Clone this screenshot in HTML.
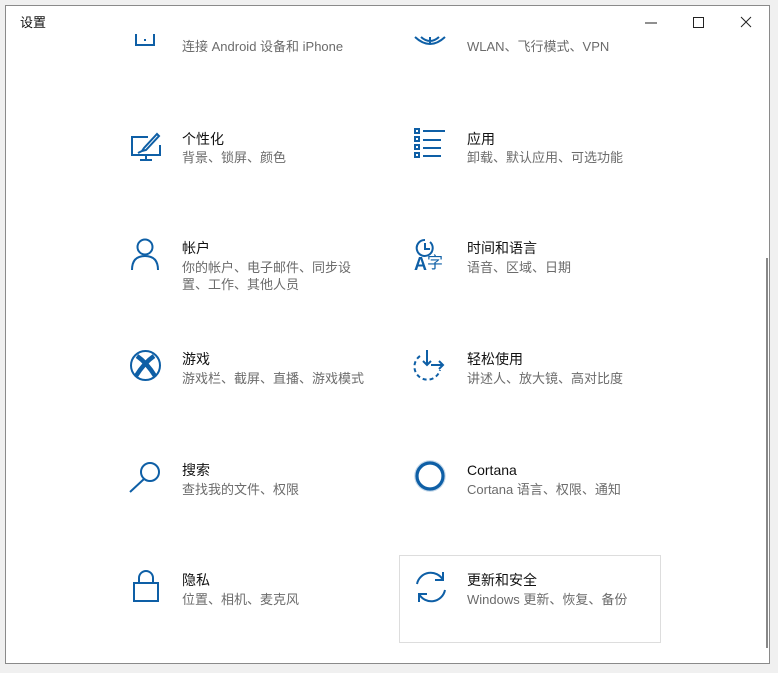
<!DOCTYPE html>
<html><head><meta charset="utf-8"><style>
body{margin:0;width:778px;height:673px;background:#f0f0f0;position:relative;overflow:hidden;font-family:"Liberation Sans","Noto Sans CJK SC",sans-serif}
.win{position:absolute;left:5px;top:5px;width:765px;height:659px;background:#fff;border:1px solid #8a8a8a;box-sizing:border-box}
.t{position:absolute;font-size:14px;color:#111;line-height:18px;white-space:nowrap}
.s{position:absolute;font-size:13px;color:#6b6b6b;line-height:18px;white-space:nowrap}
svg{position:absolute;overflow:visible}
.i{fill:none;stroke:#0e5fa6;stroke-width:2}
</style></head><body>
<div class="win"></div>
<div class="t" style="left:20px;top:14px;font-size:13px">设置</div>
<svg style="left:640px;top:14px" width="120" height="20"><path d="M5 9h12" stroke="#222" stroke-width="1"/><rect x="53.5" y="3.5" width="10" height="10" fill="none" stroke="#222"/><path d="M101 3l10 10M111 3l-10 10" stroke="#222" stroke-width="1"/></svg>
<div style="position:absolute;left:766px;top:258px;width:2px;height:390px;background:#888"></div>

<svg style="left:130px;top:34px" width="30" height="20"><path class="i" d="M6 0v11h18V0M14 6h2"/></svg>
<div class="s" style="left:182px;top:38px">连接 Android 设备和 iPhone</div>
<svg style="left:413px;top:34px" width="34" height="20"><path class="i" d="M2 3q15 14 30 0M8 3q9 8 18 0M17 3v7"/></svg>
<div class="s" style="left:467px;top:38px">WLAN、飞行模式、VPN</div>

<svg style="left:130px;top:131px" width="34" height="30"><path class="i" d="M18 6H2v18h28v-10M16 24v5M10 29h12"/><path class="i" d="M12 20l4-1 13-14-2-2-13 14z M8 22l4-2"/></svg>
<div class="t" style="left:182px;top:130px">个性化</div>
<div class="s" style="left:182px;top:149px">背景、锁屏、颜色</div>
<svg style="left:413px;top:128px" width="34" height="30"><path class="i" d="M2 1h4v4H2zM2 9h4v4H2zM2 17h4v4H2zM2 25h4v4H2z" stroke-width="1.6"/><path class="i" d="M10 3h22M10 12h18M10 20h18M10 28h18"/></svg>
<div class="t" style="left:467px;top:130px">应用</div>
<div class="s" style="left:467px;top:149px">卸载、默认应用、可选功能</div>

<svg style="left:130px;top:238px" width="32" height="34"><circle class="i" cx="15" cy="9" r="7.5"/><path class="i" d="M2 32q0-14 13-14t13 14"/></svg>
<div class="t" style="left:182px;top:239px">帐户</div>
<div class="s" style="left:182px;top:259px">你的帐户、电子邮件、同步设</div>
<div class="s" style="left:182px;top:276px">置、工作、其他人员</div>
<svg style="left:413px;top:238px" width="36" height="34"><path class="i" d="M12 2a8 8 0 1 0 5 2M12 5v6h5"/><text x="1" y="32" font-size="18" font-weight="bold" fill="#0e5fa6" font-family="Liberation Sans">A</text><text x="14" y="30" font-size="16" fill="#0e5fa6" font-family="Noto Sans CJK SC">字</text></svg>
<div class="t" style="left:467px;top:239px">时间和语言</div>
<div class="s" style="left:467px;top:259px">语音、区域、日期</div>

<svg style="left:130px;top:350px" width="32" height="32"><circle class="i" cx="15.5" cy="15.5" r="14.5" stroke-width="2.3"/><path d="M7 6Q17 13 25 26M24 6Q14 13 6 26" fill="none" stroke="#0e5fa6" stroke-width="4.5"/></svg>
<div class="t" style="left:182px;top:350px">游戏</div>
<div class="s" style="left:182px;top:370px">游戏栏、截屏、直播、游戏模式</div>
<svg style="left:413px;top:350px" width="36" height="32"><path class="i" d="M7 6a13 13 0 1 0 20 14" stroke-dasharray="4 3"/><path class="i" d="M14 0v15M10 11l4 4 4-4M18 15h12M26 11l4 4-4 4"/></svg>
<div class="t" style="left:467px;top:350px">轻松使用</div>
<div class="s" style="left:467px;top:370px">讲述人、放大镜、高对比度</div>

<svg style="left:129px;top:460px" width="34" height="34"><circle class="i" cx="21" cy="12" r="9"/><path class="i" d="M15 19L1 32"/></svg>
<div class="t" style="left:182px;top:461px">搜索</div>
<div class="s" style="left:182px;top:481px">查找我的文件、权限</div>
<svg style="left:413px;top:460px" width="34" height="34"><circle cx="17" cy="16" r="13" fill="none" stroke="#0e5fa6" stroke-width="3.2"/><circle cx="17" cy="16" r="15" fill="none" stroke="#0e5fa6" stroke-opacity=".25" stroke-width="1.5"/></svg>
<div class="t" style="left:467px;top:461px">Cortana</div>
<div class="s" style="left:467px;top:481px">Cortana 语言、权限、通知</div>

<svg style="left:132px;top:570px" width="30" height="34"><path class="i" d="M7 13V8a7 7 0 0 1 14 0v5"/><rect class="i" x="2" y="13" width="24" height="18"/></svg>
<div class="t" style="left:182px;top:571px">隐私</div>
<div class="s" style="left:182px;top:591px">位置、相机、麦克风</div>
<div style="position:absolute;left:399px;top:555px;width:262px;height:88px;border:1px solid #ddd;box-sizing:border-box"></div>
<svg style="left:413px;top:570px" width="36" height="34"><path class="i" d="M4 14A14 14 0 0 1 30 10M30 2v8h-8M32 20A14 14 0 0 1 6 24M6 32v-8h8"/></svg>
<div class="t" style="left:467px;top:571px">更新和安全</div>
<div class="s" style="left:467px;top:591px">Windows 更新、恢复、备份</div>
</body></html>
